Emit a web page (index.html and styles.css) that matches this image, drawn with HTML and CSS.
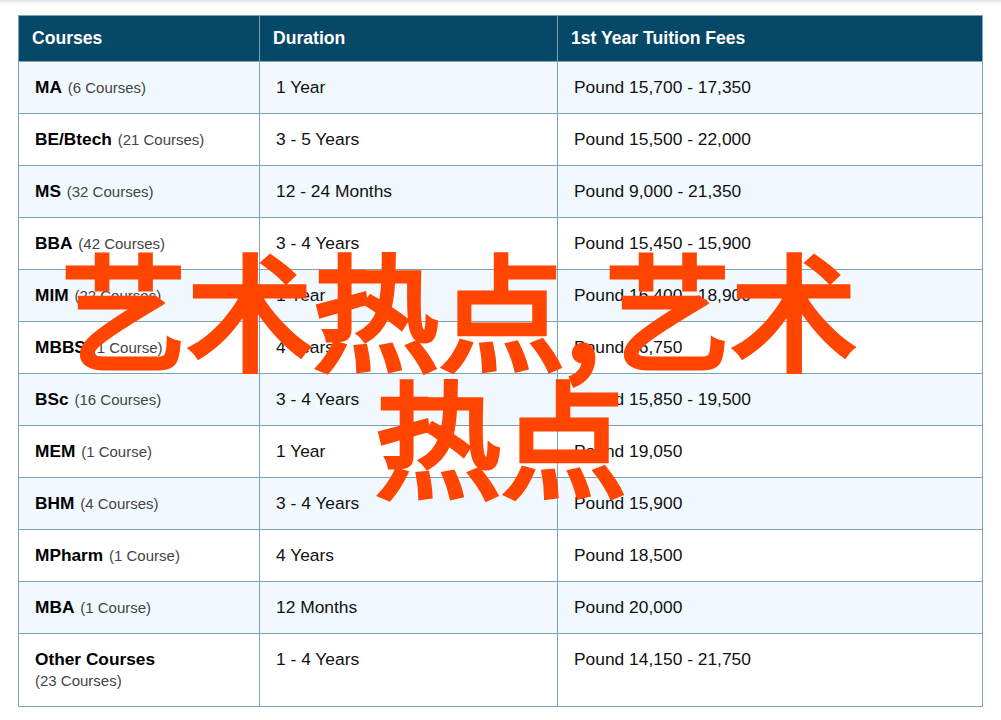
FILE: index.html
```html
<!DOCTYPE html>
<html lang="zh">
<head>
<meta charset="utf-8">
<title>Courses</title>
<link rel="stylesheet" href="styles.css">
</head>
<body>
<div class="shade"></div>
<main class="page">
<table class="fees">
<colgroup><col class="c1"><col class="c2"><col class="c3"></colgroup>
<thead><tr><th>Courses</th><th>Duration</th><th>1st Year Tuition Fees</th></tr></thead>
<tbody>
<tr><td><b>MA</b> <span>(6 Courses)</span></td><td>1 Year</td><td>Pound 15,700 - 17,350</td></tr>
<tr><td><b>BE/Btech</b> <span>(21 Courses)</span></td><td>3 - 5 Years</td><td>Pound 15,500 - 22,000</td></tr>
<tr><td><b>MS</b> <span>(32 Courses)</span></td><td>12 - 24 Months</td><td>Pound 9,000 - 21,350</td></tr>
<tr><td><b>BBA</b> <span>(42 Courses)</span></td><td>3 - 4 Years</td><td>Pound 15,450 - 15,900</td></tr>
<tr><td><b>MIM</b> <span>(22 Courses)</span></td><td>1 Year</td><td>Pound 16,400 - 18,900</td></tr>
<tr><td><b>MBBS</b> <span>(1 Course)</span></td><td>4 Years</td><td>Pound 16,750</td></tr>
<tr><td><b>BSc</b> <span>(16 Courses)</span></td><td>3 - 4 Years</td><td>Pound 15,850 - 19,500</td></tr>
<tr><td><b>MEM</b> <span>(1 Course)</span></td><td>1 Year</td><td>Pound 19,050</td></tr>
<tr><td><b>BHM</b> <span>(4 Courses)</span></td><td>3 - 4 Years</td><td>Pound 15,900</td></tr>
<tr><td><b>MPharm</b> <span>(1 Course)</span></td><td>4 Years</td><td>Pound 18,500</td></tr>
<tr><td><b>MBA</b> <span>(1 Course)</span></td><td>12 Months</td><td>Pound 20,000</td></tr>
<tr class="last"><td><b>Other Courses</b><br><span>(23 Courses)</span></td><td>1 - 4 Years</td><td>Pound 14,150 - 21,750</td></tr>
</tbody>
</table>
</main>
<div class="headline">
<div class="line one">艺术热点<span class="comma">,</span>艺术</div>
<div class="line two">热点</div>
</div>
</body>
</html>
```
FILE: styles.css
```css
html, body { margin: 0; padding: 0; background: #fff; height: 720px; overflow: hidden; }
body { position: relative; font-family: "Liberation Sans", Arial, sans-serif; }
.shade { height: 4px; background: linear-gradient(#e4e4e4, #fff); }
.page { padding: 11px 18px 0; }
.fees { border-collapse: collapse; table-layout: fixed; width: 965px; color: #111; font-size: 17.4px; }
.c1 { width: 241px; }
.c2 { width: 298px; }
.fees th, .fees td { border: 1px solid #7ba3b8; text-align: left; box-sizing: border-box; }
.fees th { height: 46px; background: #064867; color: #fff; font-size: 17.6px; font-weight: bold; padding: 0 13px; }
.fees td { height: 52px; padding: 0 16px 2px; vertical-align: middle; line-height: 22px; }
.fees td:first-child { padding-bottom: 0; }
.fees tbody tr:nth-child(odd) td { background: #f2f9fe; }
.fees td b { color: #000; font-size: 17.3px; margin-right: 1px; }
.fees td span { color: #444; font-size: 15px; }
.fees .last td { height: 73px; vertical-align: top; padding-top: 14px; }
.fees .last td:first-child { line-height: 21px; padding-top: 15px; }
.headline { position: absolute; left: 0; top: 243px; width: 1001px; color: #ff4500; -webkit-text-stroke: 5px #ff4500; font-family: "Noto Sans CJK SC", sans-serif; font-size: 126px; line-height: 127px; font-weight: 400; white-space: nowrap; }
.line.one { margin-left: 61px; }
.line.two { margin-left: 375px; }
.comma { margin-right: 5px; }
```
